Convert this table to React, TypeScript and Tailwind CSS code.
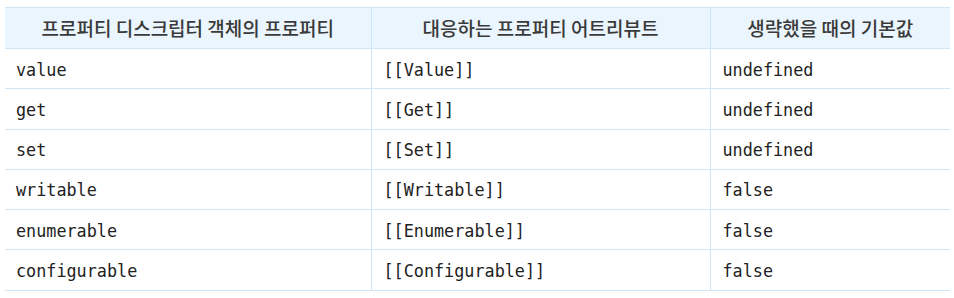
const rows = [
  ['value', '[[Value]]', 'undefined'],
  ['get', '[[Get]]', 'undefined'],
  ['set', '[[Set]]', 'undefined'],
  ['writable', '[[Writable]]', 'false'],
  ['enumerable', '[[Enumerable]]', 'false'],
  ['configurable', '[[Configurable]]', 'false'],
]

export default function App() {
  return (
    <div className="bg-white w-[954px] h-[298px] pl-[5px] pr-[4px] pt-[7px]">
      <table className="w-[945px] border-collapse table-fixed">
        <colgroup>
          <col className="w-[366px]" />
          <col className="w-[339px]" />
          <col className="w-[240px]" />
        </colgroup>
        <thead>
          <tr className="bg-[#eaf5fd] h-[41px] font-['Noto_Sans_CJK_KR',sans-serif] text-[19px] text-[#3a3a3a]">
            <th className="border-y border-[#cfe6f8] font-medium text-center">프로퍼티 디스크립터 객체의 프로퍼티</th>
            <th className="border border-[#cfe6f8] font-medium text-center">대응하는 프로퍼티 어트리뷰트</th>
            <th className="border-y border-[#cfe6f8] font-medium text-center">생략했을 때의 기본값</th>
          </tr>
        </thead>
        <tbody className="font-['DejaVu_Sans_Mono',monospace] text-[16.8px] text-[#222]">
          {rows.map((r) => (
            <tr key={r[0]} className="h-[40.3px]">
              <td className="border-y border-[#cfe6f8] px-[11px] pt-[3px]">{r[0]}</td>
              <td className="border border-[#cfe6f8] px-[12px] pt-[3px]">{r[1]}</td>
              <td className="border-y border-[#cfe6f8] px-[12px] pt-[3px]">{r[2]}</td>
            </tr>
          ))}
        </tbody>
      </table>
    </div>
  )
}
